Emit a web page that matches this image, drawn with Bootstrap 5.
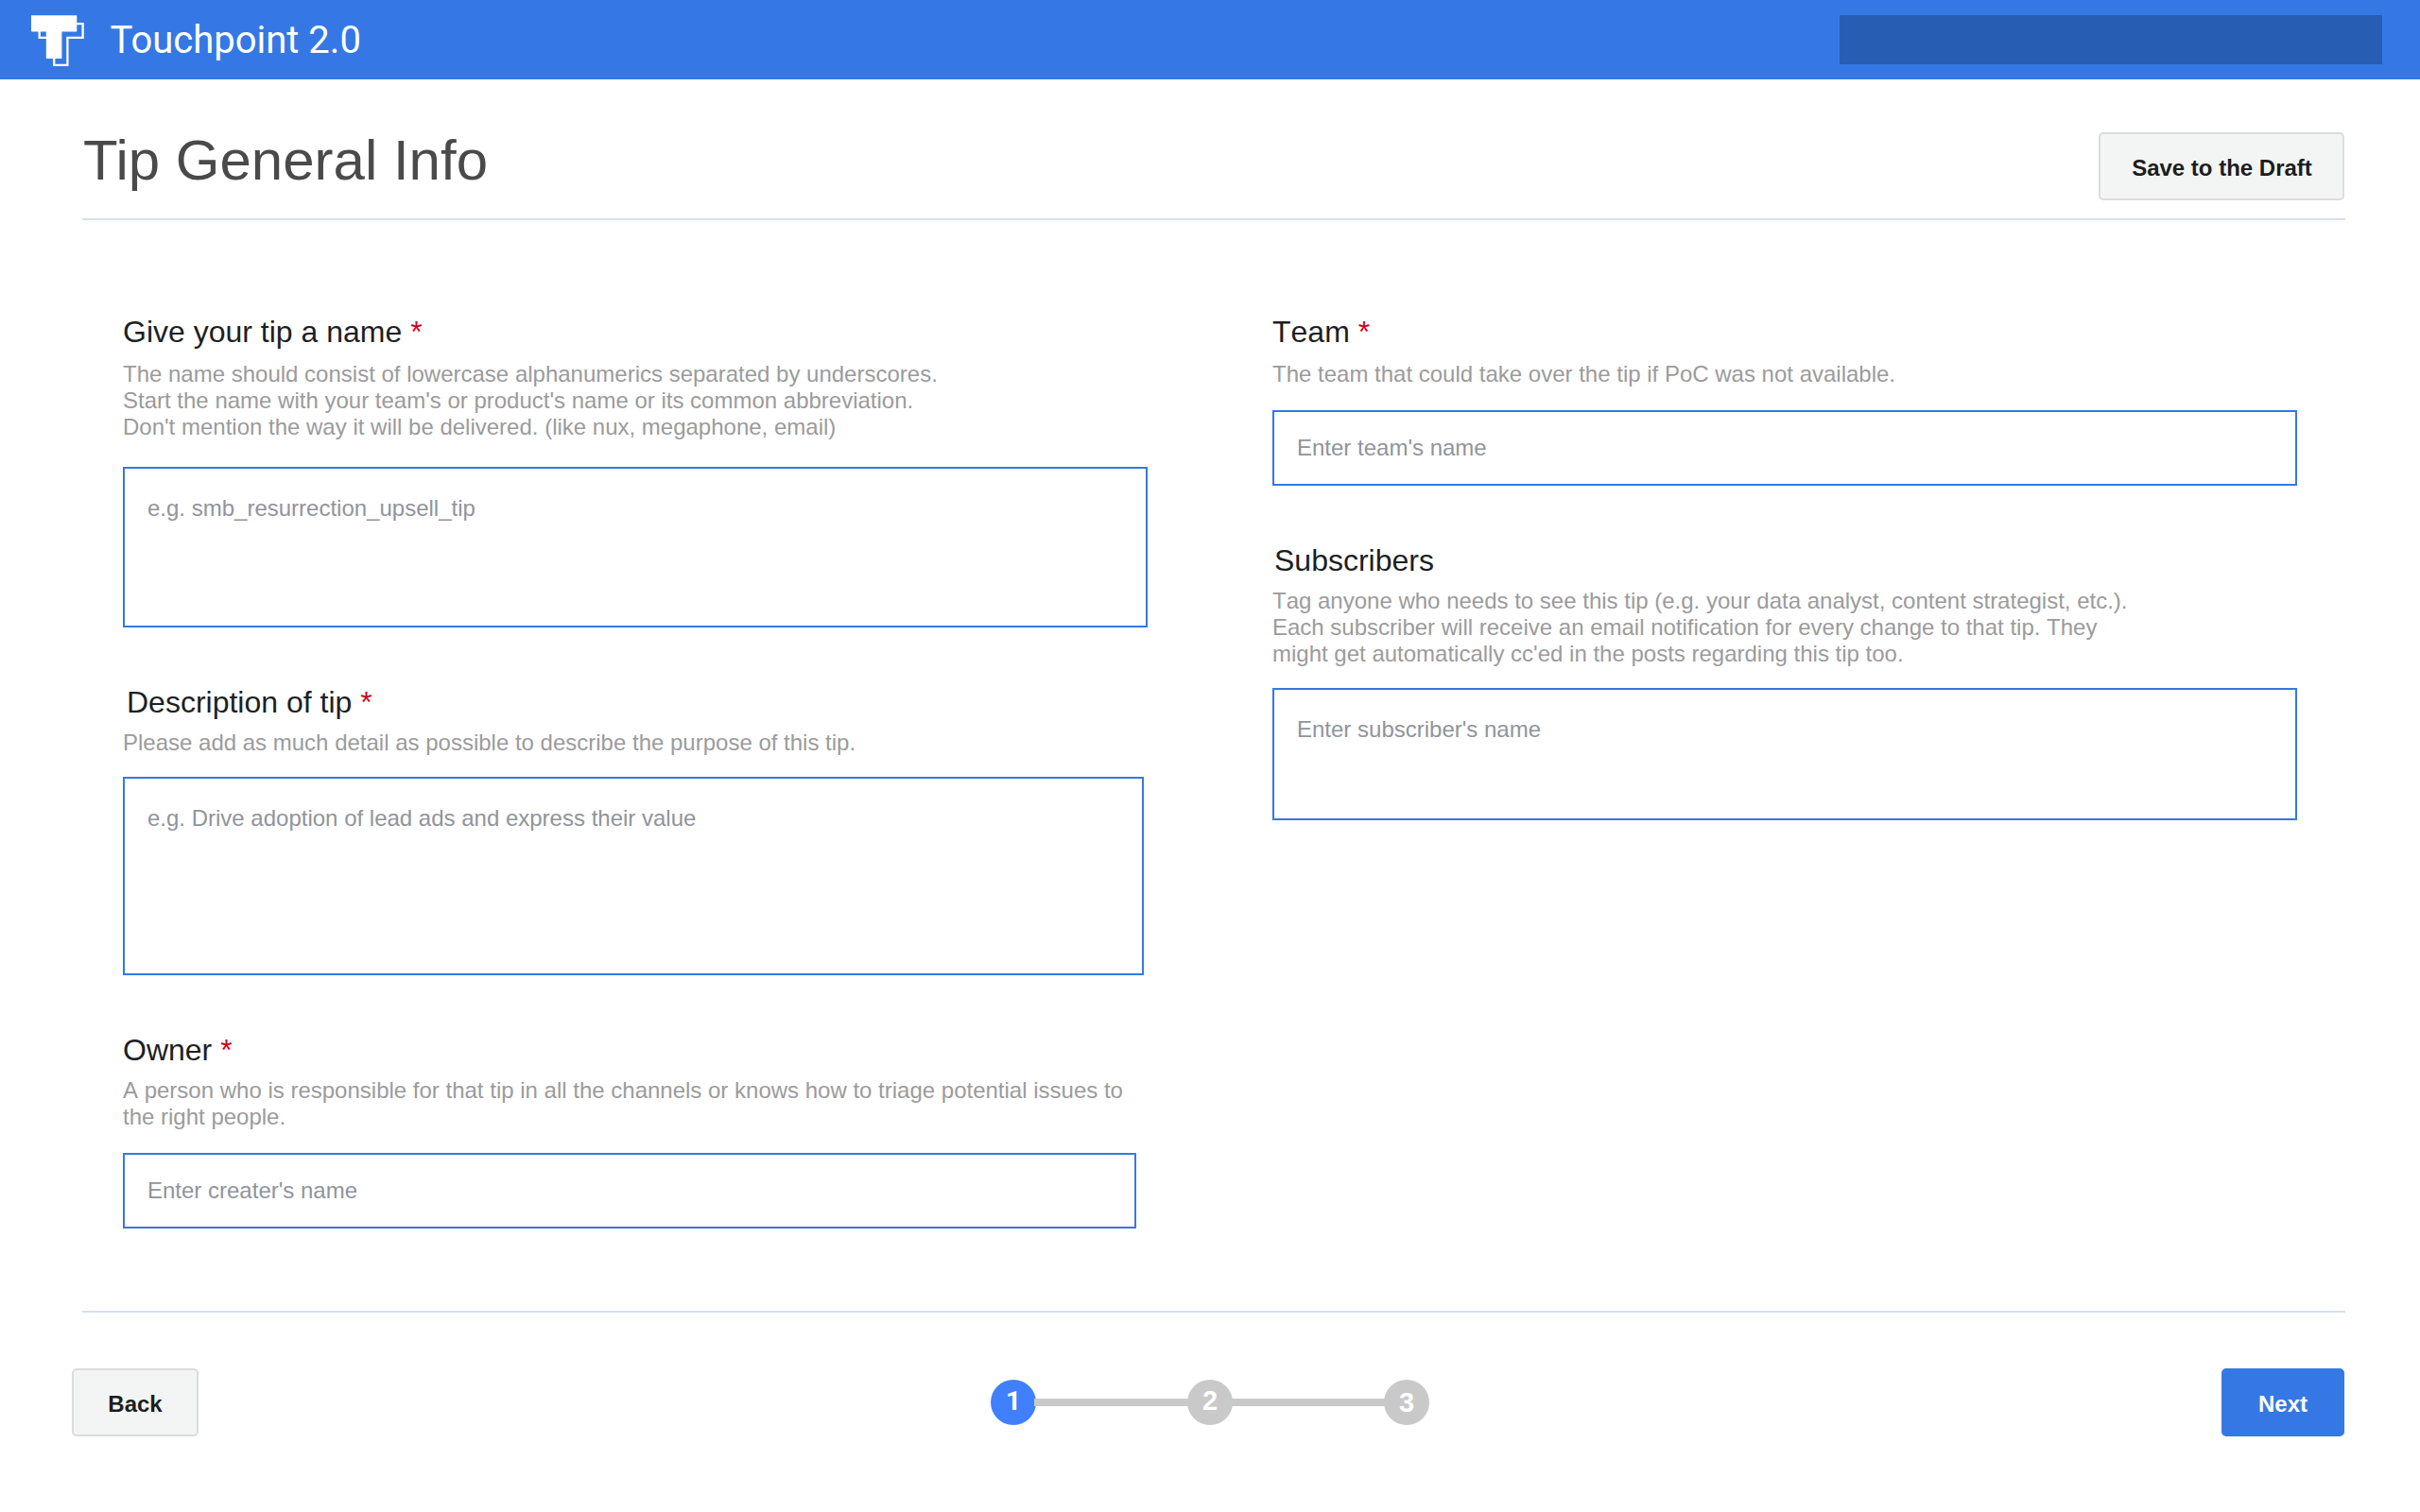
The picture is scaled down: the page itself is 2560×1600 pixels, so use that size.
<!DOCTYPE html>
<html lang="en">
<head>
<meta charset="utf-8">
<meta name="viewport" content="width=device-width, initial-scale=1">
<title>Touchpoint 2.0</title>
<link href="https://cdn.jsdelivr.net/npm/bootstrap@5.3.0/dist/css/bootstrap.min.css" rel="stylesheet">
<style>
body{font-family:"Liberation Sans",Arial,sans-serif;font-size:24px;line-height:28px;font-kerning:none;color:#1d1f24;background:#fff}
.topbar{height:84px;background:#3578e5;padding:0 40px 0 32px}
.brand-name{font-family:Roboto,sans-serif;font-kerning:auto;font-size:40px;line-height:48px;color:#fff;margin-left:26.5px;padding-top:2px}
.searchbox{width:574px;height:52px;background:#275db3}
.page-head{margin:0 79px 0 87px;height:149px;padding:56px 1px 0 0;border-bottom:2px solid #d5dff3}
.page-title{font-size:60px;line-height:68px;font-kerning:auto;color:#4a4a4a;font-weight:400;margin:-4px 0 0 1px}
.btn-tp{--bs-btn-font-size:24px;--bs-btn-font-weight:700;--bs-btn-line-height:28px;--bs-btn-border-width:2px;--bs-btn-border-radius:5px;--bs-btn-padding-y:0;height:72px;padding-top:4px}
.btn-plain{--bs-btn-bg:#f3f5f5;--bs-btn-border-color:#dadddd;--bs-btn-color:#1c1e1e}
.btn-next{--bs-btn-bg:#3578e5;--bs-btn-border-color:#3578e5;--bs-btn-color:#fff}
.btn-save{width:260px;padding-left:13px}
.btn-back{width:134px}
.btn-go{width:130px}
.form-area{padding:100px 130px 0;height:1154px}
.field-col{width:1084px}
.field-box + .field-box{margin-top:61px}
.field-title{font-size:32px;line-height:36px;margin:0 0 11px;display:block}
.field-title.roomy{margin-bottom:13px}
.field-title.inset{padding-left:4px}
.field-title.nudged{padding-left:2px}
.req{color:#d0021b}
.hint{color:#9b9b9b;margin:0;white-space:nowrap}
.form-control.tp-input{border:2px solid #3578e5;border-radius:0;padding:0 24px;font-size:24px;line-height:28px;height:80px;resize:none;background:#fff;display:block}
textarea.form-control.tp-input{padding-top:28px;overflow:hidden}
.form-control.tp-input::placeholder{color:#90949c;opacity:1}
.form-control.h-name{height:170px;margin-top:28px}
.form-control.h-desc{height:210px;width:1080px;margin-top:22px}
.form-control.h-owner{width:1072px;margin-top:24px}
.form-control.h-team{margin-top:24px}
.form-control.h-subs{height:140px;margin-top:22px}
.page-rule{margin:0 79px 0 87px;height:2px;background:#d5dff3}
.page-foot{padding:59px 80px 0 76px}
.step-dot{width:48px;height:48px;border-radius:50%;background:#c9c9c9;color:#fff;font-weight:700;font-size:29px;line-height:32px;padding-bottom:4px}
.step-dot.current{background:#4080ff;font-family:Roboto,sans-serif;font-size:28px;padding-bottom:2px}
.step-dot.third{padding-bottom:0}
.step-bar{width:164px;height:8px;background:#c9c9c9;margin:0 -2px;z-index:1}
</style>
</head>
<body>
<nav class="topbar d-flex align-items-center justify-content-between">
<div class="d-flex align-items-center">
<svg width="58" height="84" viewBox="32 0 58 84" aria-hidden="true"><path d="M41.7 25.2H87.6V39.8H71.4V68.8H57.2V39.8H41.7Z" fill="none" stroke="#fff" stroke-width="2.3"/><rect x="33" y="16.2" width="48.3" height="17.2" rx=".6" fill="#fff"/><path d="M48.8 30H65.4V62H48.8Z" fill="#fff"/></svg>
<span class="brand-name">Touchpoint 2.0</span></div>
<div class="searchbox"></div>
</nav>

<header class="page-head d-flex justify-content-between align-items-start">
<h1 class="page-title">Tip General Info</h1>
<button type="button" class="btn btn-tp btn-plain btn-save">Save to the Draft</button>
</header>

<main class="form-area d-flex justify-content-between">
<div class="field-col">
<div class="field-box">
<label class="field-title roomy" for="tipName">Give your tip a name <span class="req">*</span></label>
<p class="hint">The name should consist of lowercase alphanumerics separated by underscores.<br>Start the name with your team's or product's name or its common abbreviation.<br>Don't mention the way it will be delivered. (like nux, megaphone, email)</p>
<textarea id="tipName" class="form-control tp-input h-name" placeholder="e.g. smb_resurrection_upsell_tip"></textarea>
</div>
<div class="field-box">
<label class="field-title inset" for="tipDesc">Description of tip <span class="req">*</span></label>
<p class="hint">Please add as much detail as possible to describe the purpose of this tip.</p>
<textarea id="tipDesc" class="form-control tp-input h-desc" placeholder="e.g. Drive adoption of lead ads and express their value"></textarea>
</div>
<div class="field-box">
<label class="field-title" for="tipOwner">Owner <span class="req">*</span></label>
<p class="hint">A person who is responsible for that tip in all the channels or knows how to triage potential issues to<br>the right people.</p>
<input id="tipOwner" class="form-control tp-input h-owner" placeholder="Enter creater's name">
</div>
</div>
<div class="field-col">
<div class="field-box">
<label class="field-title roomy" for="tipTeam">Team <span class="req">*</span></label>
<p class="hint">The team that could take over the tip if PoC was not available.</p>
<input id="tipTeam" class="form-control tp-input h-team" placeholder="Enter team's name">
</div>
<div class="field-box">
<label class="field-title nudged" for="tipSubs">Subscribers</label>
<p class="hint">Tag anyone who needs to see this tip (e.g. your data analyst, content strategist, etc.).<br>Each subscriber will receive an email notification for every change to that tip. They<br>might get automatically cc'ed in the posts regarding this tip too.</p>
<textarea id="tipSubs" class="form-control tp-input h-subs" placeholder="Enter subscriber's name"></textarea>
</div>
</div>
</main>

<div class="page-rule"></div>
<footer class="page-foot d-flex justify-content-between align-items-center">
<button type="button" class="btn btn-tp btn-plain btn-back">Back</button>
<div class="d-flex align-items-center">
<span class="step-dot current d-flex align-items-center justify-content-center">1</span>
<span class="step-bar"></span>
<span class="step-dot d-flex align-items-center justify-content-center">2</span>
<span class="step-bar"></span>
<span class="step-dot third d-flex align-items-center justify-content-center">3</span>
</div>
<button type="button" class="btn btn-tp btn-next btn-go">Next</button>
</footer>
<script src="https://cdn.jsdelivr.net/npm/bootstrap@5.3.0/dist/js/bootstrap.bundle.min.js"></script>
</body>
</html>
